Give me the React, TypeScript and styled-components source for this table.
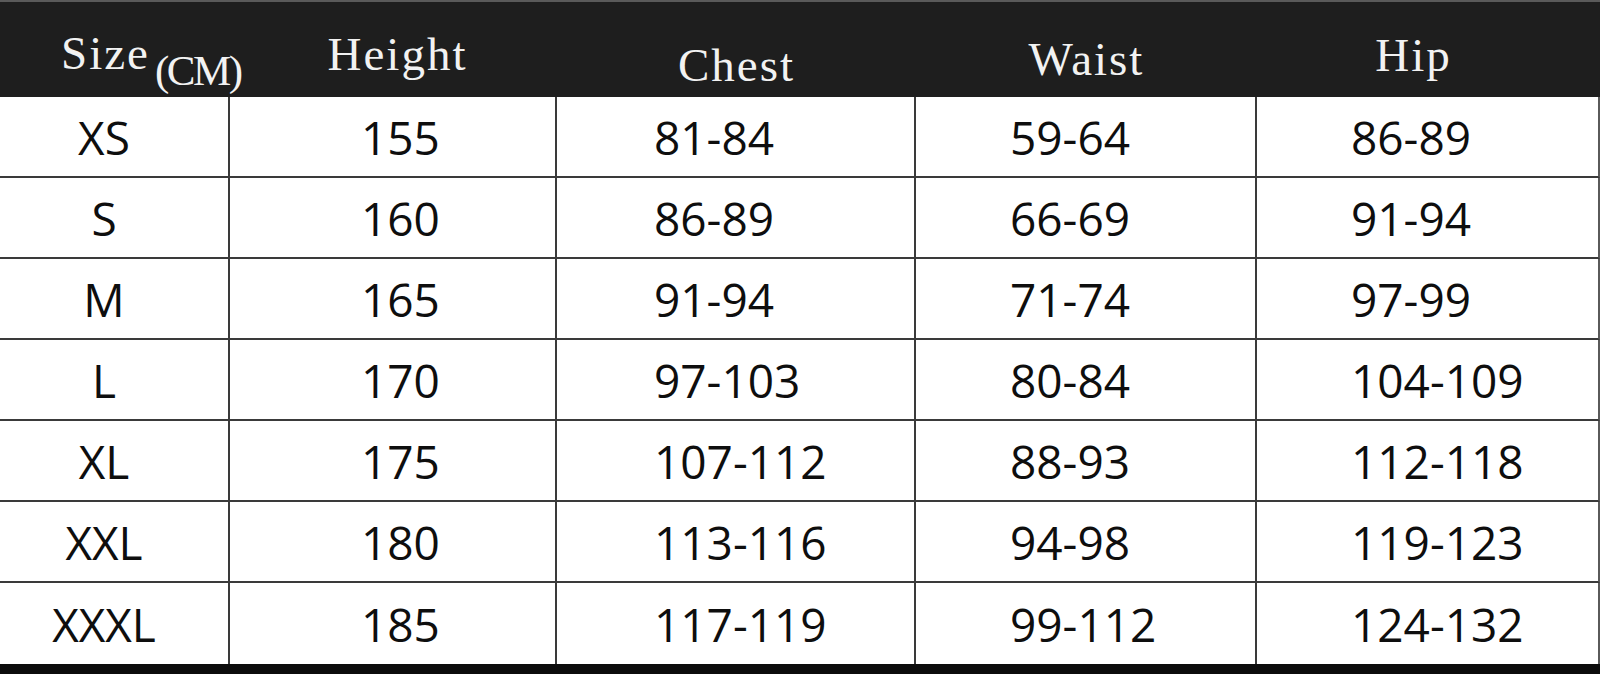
import React from 'react';
import styled, { createGlobalStyle } from 'styled-components';

const GlobalStyle = createGlobalStyle`
  html, body {
    margin: 0;
    padding: 0;
    background: #ffffff;
  }
`;

const Sheet = styled.div`
  width: 1600px;
  height: 674px;
  display: flex;
  flex-direction: column;
  background: #ffffff;
  overflow: hidden;
`;

const Grid = styled.div`
  display: grid;
  grid-template-columns: 230px 327px 359px 341px 343px;
  grid-template-rows: 97px repeat(7, 81px);
`;

const HeaderCell = styled.div<{ $top: number; $pad?: number; $padRight?: number; $align?: string }>`
  box-sizing: border-box;
  background: #1e1e1e;
  border-top: 2px solid #5a5a5a;
  color: #f2f2f2;
  font-family: 'Liberation Serif', 'Times New Roman', serif;
  font-size: 47px;
  letter-spacing: 2px;
  line-height: 1;
  padding-top: ${(p) => p.$top}px;
  padding-left: ${(p) => p.$pad ?? 0}px;
  padding-right: ${(p) => p.$padRight ?? 0}px;
  text-align: ${(p) => p.$align ?? 'center'};
  white-space: nowrap;
`;

const Unit = styled.span`
  position: relative;
  z-index: 1;
  font-size: 43px;
  letter-spacing: -2.5px;
  margin-left: 5px;
  vertical-align: -16px;
`;

const Cell = styled.div<{ $align: string; $padLeft?: number; $padRight?: number; $last?: boolean }>`
  box-sizing: border-box;
  display: flex;
  align-items: center;
  justify-content: ${(p) => (p.$align === 'center' ? 'center' : 'flex-start')};
  padding-left: ${(p) => p.$padLeft ?? 0}px;
  padding-right: ${(p) => p.$padRight ?? 0}px;
  border-bottom: 2px solid #3a3a3a;
  border-right: 2px solid ${(p) => (p.$last ? '#5a5a5a' : '#3a3a3a')};
  font-family: 'Open Sans', 'Liberation Sans', sans-serif;
  font-size: 46px;
  line-height: 1;
  color: #0e0e0e;
  white-space: nowrap;
  &:nth-last-child(-n + 5) {
    border-bottom: 0;
  }
`;

const Footer = styled.div`
  flex: 1;
  background: #0c0c0c;
`;

const rows = [
  ['XS', '155', '81-84', '59-64', '86-89'],
  ['S', '160', '86-89', '66-69', '91-94'],
  ['M', '165', '91-94', '71-74', '97-99'],
  ['L', '170', '97-103', '80-84', '104-109'],
  ['XL', '175', '107-112', '88-93', '112-118'],
  ['XXL', '180', '113-116', '94-98', '119-123'],
  ['XXXL', '185', '117-119', '99-112', '124-132'],
];

const columns = [
  { align: 'center', padRight: 20 },
  { align: 'left', padLeft: 131 },
  { align: 'left', padLeft: 97 },
  { align: 'left', padLeft: 94 },
  { align: 'left', padLeft: 94 },
];

const App: React.FC = () => {
  return (
    <Sheet>
      <GlobalStyle />
      <Grid>
        <HeaderCell $top={28} $pad={61} $align="left">
          Size<Unit>(CM)</Unit>
        </HeaderCell>
        <HeaderCell $top={29} $pad={8}>Height</HeaderCell>
        <HeaderCell $top={40}>Chest</HeaderCell>
        <HeaderCell $top={34}>Waist</HeaderCell>
        <HeaderCell $top={30} $padRight={30}>Hip</HeaderCell>
        {rows.map((row, r) =>
          row.map((value, c) => (
            <Cell
              key={`${r}-${c}`}
              $align={columns[c].align}
              $padLeft={columns[c].padLeft}
              $padRight={columns[c].padRight}
              $last={c === 4}
            >
              {value}
            </Cell>
          ))
        )}
      </Grid>
      <Footer />
    </Sheet>
  );
};

export default App;
